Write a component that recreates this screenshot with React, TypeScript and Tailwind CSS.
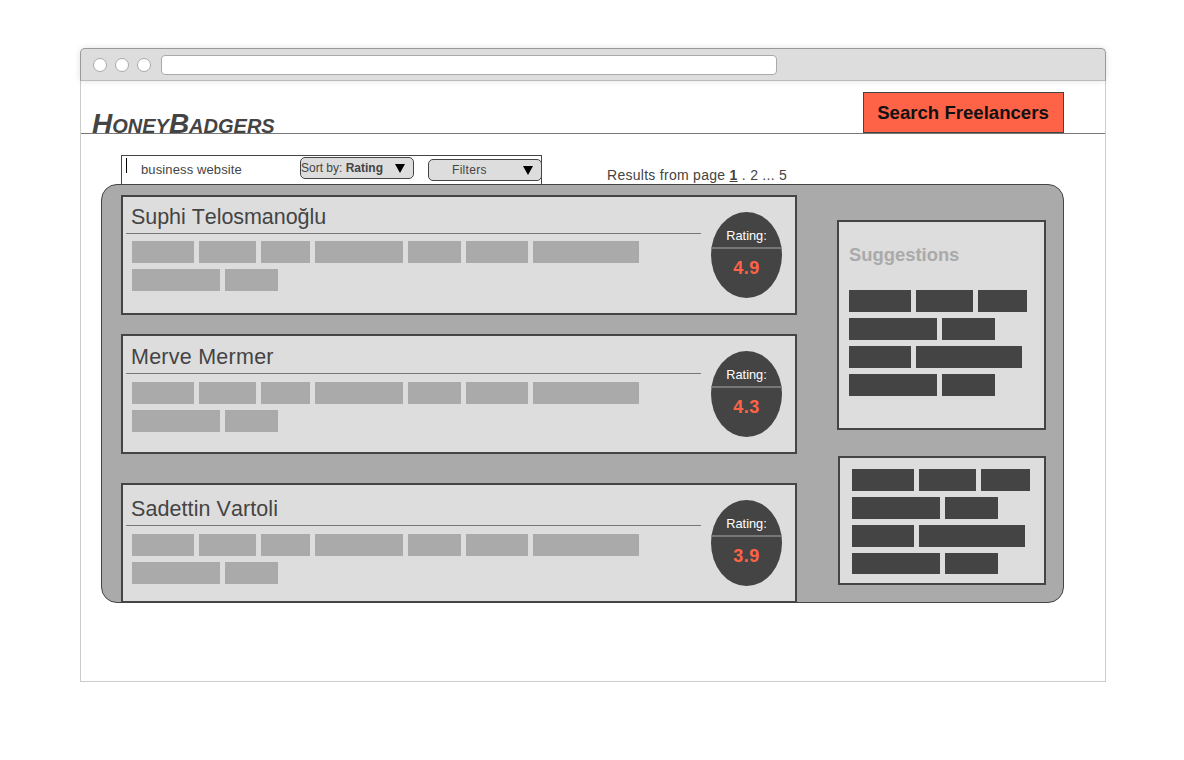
import React from "react";

const BAR_WIDTHS: Record<number, string> = {
  49: "w-[49px]",
  53: "w-[53px]",
  57: "w-[57px]",
  62: "w-[62px]",
  88: "w-[88px]",
  106: "w-[106px]",
};

const SUGGESTION_ROWS = [
  [62, 57, 49],
  [88, 53],
  [62, 106],
  [88, 53],
];

const PROFILE_ROWS = [
  [62, 57, 49, 88, 53, 62, 106],
  [88, 53],
];

const FREELANCERS = [
  { name: "Suphi Telosmanoğlu", rating: "4.9", card: "", head: "h-[37px] pt-2 tracking-[-0.05px]", bars: "mt-[7px]" },
  { name: "Merve Mermer", rating: "4.3", card: "mt-[19px]", head: "h-[38px] pt-[9px] tracking-[0.25px]", bars: "mt-2" },
  { name: "Sadettin Vartoli", rating: "3.9", card: "mt-[29px]", head: "h-[41px] pt-3 tracking-[0.08px]", bars: "mt-2" },
];

function Bars({ rows, color }: { rows: number[][]; color: string }) {
  return (
    <div className="flex flex-col gap-1.5">
      {rows.map((row, i) => (
        <div key={i} className="flex gap-[5px]">
          {row.map((w, j) => (
            <div key={j} className={`h-[22px] ${BAR_WIDTHS[w]} ${color}`} />
          ))}
        </div>
      ))}
    </div>
  );
}

function Triangle() {
  return (
    <svg width="10" height="9" viewBox="0 0 10 9" className="shrink-0">
      <path d="M0 0H10L5 9Z" fill="#000" />
    </svg>
  );
}

function Card({ name, rating, card, head, bars }: (typeof FREELANCERS)[number]) {
  return (
    <article className={`flex h-[120px] w-[676px] shrink-0 border-2 border-[#444] bg-[#ddd] pl-[3px] ${card}`}>
      <div className="w-[575px]">
        <h2 className={`border-b border-[#777] pl-[5px] text-[21.5px] leading-6 [font-kerning:none] ${head}`}>{name}</h2>
        <div className={`pl-1.5 ${bars}`}>
          <Bars rows={PROFILE_ROWS} color="bg-[#aaa]" />
        </div>
      </div>
      <div className="mt-[15px] ml-2.5 flex h-[86px] w-[71px] flex-col overflow-hidden rounded-[50%] bg-[#444] text-center">
        <div className="h-[37px] border-b-2 border-[#777] pt-4 text-[12.8px] leading-4 text-white">Rating:</div>
        <div className="pt-[9px] text-[18px] leading-5 font-bold tracking-[0.5px] text-[#ff6347]">{rating}</div>
      </div>
    </article>
  );
}

export default function App() {
  return (
    <div className="h-[760px] w-[1184px] overflow-hidden bg-white pt-12 pl-20 font-['Liberation_Sans',Arial,sans-serif] text-[#444]">
      <div className="flex h-[634px] w-[1026px] flex-col">
        <div className="relative flex h-[33px] shrink-0 items-center rounded-t-[5px] border border-[#999] border-b-[#bbb] bg-[#ddd] pl-3 shadow-[0_0_6px_rgba(0,0,0,0.12)]">
          <div className="flex gap-2">
            <span className="size-3.5 rounded-full border border-[#aaa] bg-white" />
            <span className="size-3.5 rounded-full border border-[#aaa] bg-white" />
            <span className="size-3.5 rounded-full border border-[#aaa] bg-white" />
          </div>
          <div className="ml-2.5 h-5 w-[616px] rounded border border-[#aaa] bg-white" />
        </div>

        <div className="flex min-h-0 flex-1 flex-col border border-t-0 border-[#ccc] bg-white">
          <header className="flex h-[53px] shrink-0 justify-between border-b border-[#777] pt-[11px] pr-[41px] pl-[11px]">
            <div className="pt-4 text-[28px] leading-8 font-bold italic [font-variant:small-caps]">HoneyBadgers</div>
            <button className="h-[41px] w-[201px] border border-[#444] bg-[#ff6347] pr-px text-[18.6px] leading-5 font-bold whitespace-nowrap text-[#111]">
              Search Freelancers
            </button>
          </header>

          <div className="mt-[21px] flex h-[29px] shrink-0 pl-10">
            <div className="flex w-[421px] items-start border border-b-0 border-[#444] pl-1">
              <span className="mt-0.5 h-[15px] w-px shrink-0 bg-black" />
              <span className="mt-1.5 ml-3.5 w-[159px] shrink-0 text-[13px] leading-4 tracking-[0.12px]">business website</span>
              <button className="mt-px flex h-[22px] w-[114px] shrink-0 items-center justify-between rounded-[5px] border border-[#444] bg-[#ddd] pr-2 text-[12px] whitespace-nowrap">
                <span>
                  Sort by: <b>Rating</b>
                </span>
                <Triangle />
              </button>
              <button className="mt-[3px] ml-3.5 flex h-[22px] w-[114px] shrink-0 items-center justify-between rounded-[5px] border border-[#444] bg-[#ddd] pr-2 pl-[23px] text-[12px]">
                <span className="tracking-[0.3px]">Filters</span>
                <Triangle />
              </button>
            </div>
            <div className="ml-[65px] pt-3 text-[14px] leading-4 tracking-[0.28px]">
              Results from page <b className="underline">1</b> . 2 ... 5
            </div>
          </div>

          <main className="ml-5 flex h-[419px] w-[963px] shrink-0 items-start rounded-2xl border border-[#444] bg-[#aaa] pl-[19px]">
            <section className="flex h-[418px] flex-col pt-2.5">
              {FREELANCERS.map((f) => (
                <Card key={f.name} {...f} />
              ))}
            </section>
            <aside className="ml-10 flex flex-col items-end pt-[35px]">
              <div className="h-[210px] w-[209px] border-2 border-[#444] bg-[#ddd] pt-[23px] pl-2.5">
                <h3 className="mb-[25px] text-[18.4px] leading-5 font-bold text-[#aaa]">Suggestions</h3>
                <Bars rows={SUGGESTION_ROWS} color="bg-[#444]" />
              </div>
              <div className="mt-[26px] h-[129px] w-[208px] border-2 border-[#444] bg-[#ddd] pt-[11px] pl-3">
                <div className="h-[105px] overflow-hidden">
                  <Bars rows={SUGGESTION_ROWS} color="bg-[#444]" />
                </div>
              </div>
            </aside>
          </main>
        </div>
      </div>
    </div>
  );
}
